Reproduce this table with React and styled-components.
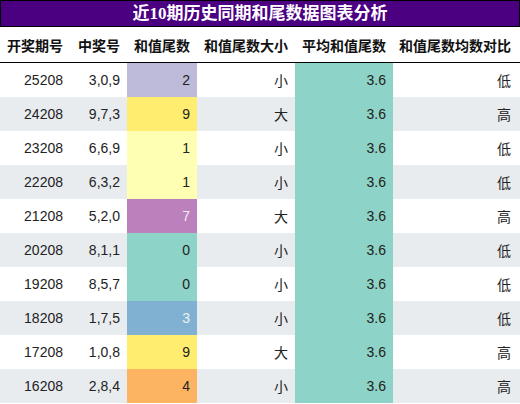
import React from "react";
import styled, { createGlobalStyle } from "styled-components";

const GlobalStyle = createGlobalStyle`
  html, body {
    margin: 0;
    padding: 0;
    background: #fff;
  }
  body {
    font-family: "Liberation Sans", "Noto Sans CJK SC", sans-serif;
  }
`;

const Wrap = styled.div`
  width: 520px;
`;

const Title = styled.div`
  height: 25px;
  border: 1px solid #000;
  background: #4b0082;
  color: #fff;
  font-family: "Liberation Serif", "Noto Sans CJK SC", serif;
  font-weight: bold;
  font-size: 17px;
  line-height: 25px;
  text-align: center;
`;

const Table = styled.table`
  width: 520px;
  border-collapse: collapse;
  table-layout: fixed;
`;

const Th = styled.th`
  height: 35px;
  padding: 0 ${(p) => (p.$last ? 9 : 7)}px 0 0;
  text-align: right;
  font-family: "Noto Sans CJK SC", sans-serif;
  font-weight: bold;
  font-size: 14px;
  color: #111;
  border-bottom: 1px solid #000;
  white-space: nowrap;
`;

const Row = styled.tr`
  background: ${(p) => (p.$odd ? "#e9ecef" : "#fff")};
`;

const Td = styled.td`
  height: 34px;
  padding: 0 ${(p) => (p.$last ? 9 : 7)}px 0 0;
  text-align: right;
  font-size: 14px;
  background: ${(p) => p.$bg || "transparent"};
  color: ${(p) => (p.$light ? "#f1f1f1" : "#222")};
`;

const Cn = styled.span`
  font-family: "Noto Sans CJK SC", sans-serif;
`;

const palette = {
  0: "#8dd3c7",
  1: "#ffffb3",
  2: "#bebada",
  3: "#80b1d3",
  4: "#fdb462",
  7: "#bc80bd",
  9: "#ffed6f",
};

const rows = [
  ["25208", "3,0,9", 2, "小", "低"],
  ["24208", "9,7,3", 9, "大", "高"],
  ["23208", "6,6,9", 1, "小", "低"],
  ["22208", "6,3,2", 1, "小", "低"],
  ["21208", "5,2,0", 7, "大", "高"],
  ["20208", "8,1,1", 0, "小", "低"],
  ["19208", "8,5,7", 0, "小", "低"],
  ["18208", "1,7,5", 3, "小", "低"],
  ["17208", "1,0,8", 9, "大", "高"],
  ["16208", "2,8,4", 4, "小", "高"],
];

const widths = [70, 57, 70, 98, 98, 127];
const heads = ["开奖期号", "中奖号", "和值尾数", "和值尾数大小", "平均和值尾数", "和值尾数均数对比"];

export default function App() {
  return (
    <Wrap>
      <GlobalStyle />
      <Title>近10期历史同期和尾数据图表分析</Title>
      <Table>
        <colgroup>
          {widths.map((w, i) => (
            <col key={i} style={{ width: w }} />
          ))}
        </colgroup>
        <thead>
          <tr>
            {heads.map((h, i) => (
              <Th key={h} $last={i === heads.length - 1}>
                {h}
              </Th>
            ))}
          </tr>
        </thead>
        <tbody>
          {rows.map((r, i) => (
            <Row key={r[0]} $odd={i % 2 === 1}>
              <Td>{r[0]}</Td>
              <Td>{r[1]}</Td>
              <Td $bg={palette[r[2]]} $light={r[2] === 7 || r[2] === 3}>
                {r[2]}
              </Td>
              <Td>
                <Cn>{r[3]}</Cn>
              </Td>
              <Td $bg="#8dd3c7">3.6</Td>
              <Td $last>
                <Cn>{r[4]}</Cn>
              </Td>
            </Row>
          ))}
        </tbody>
      </Table>
    </Wrap>
  );
}
